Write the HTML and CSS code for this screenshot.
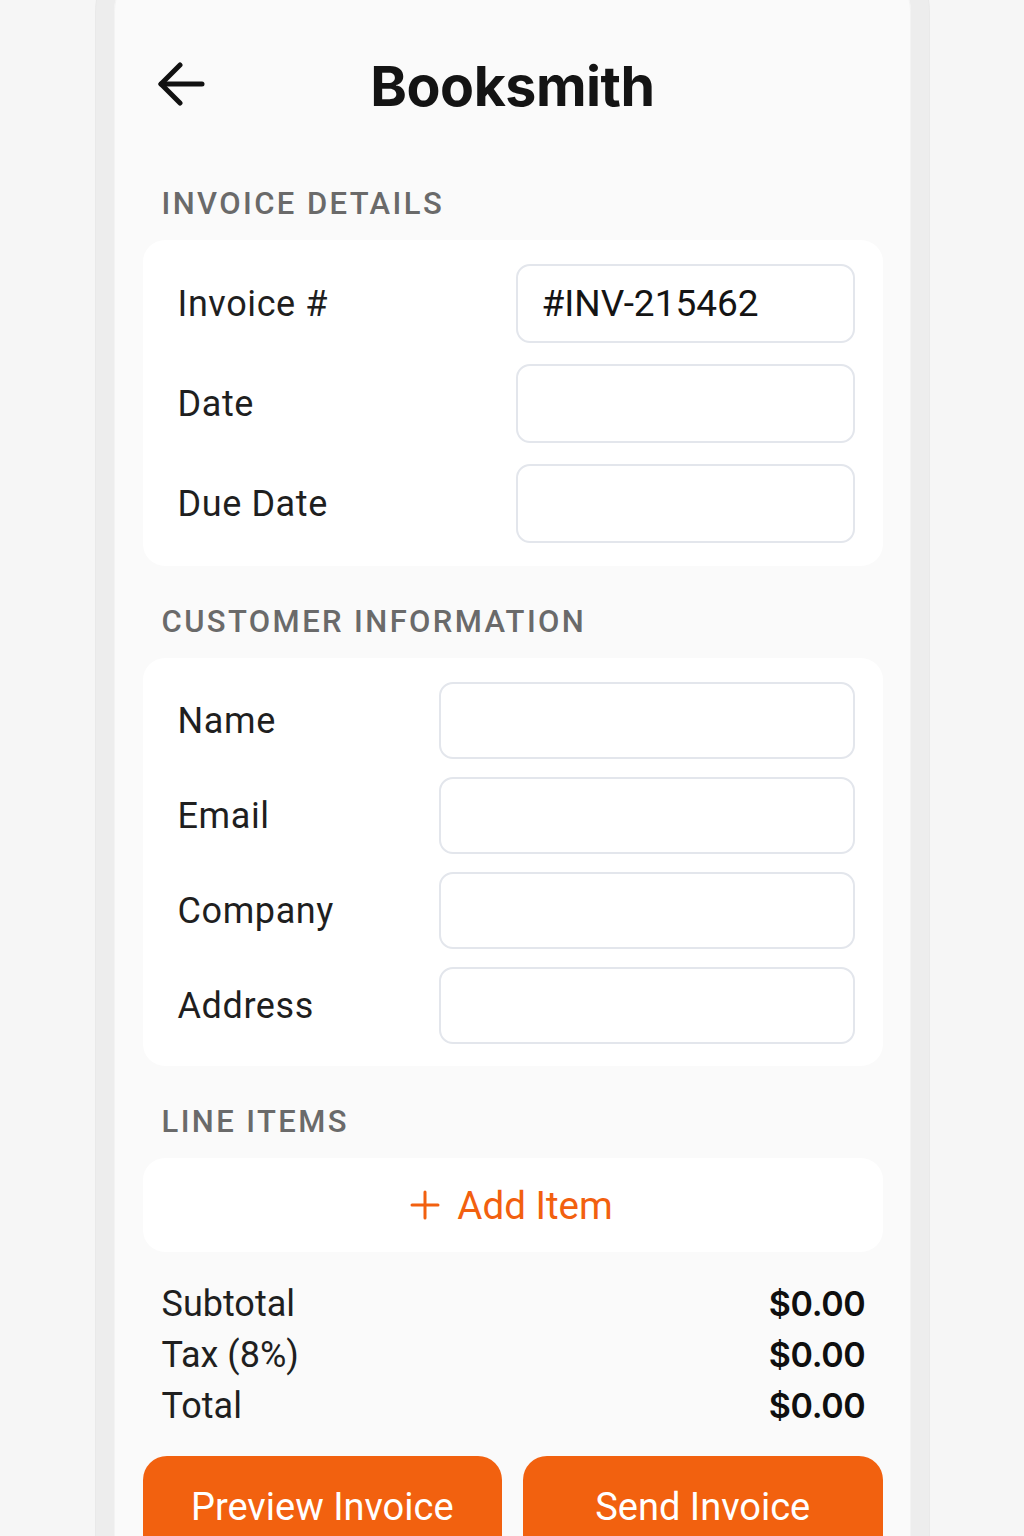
FILE: index.html
```html
<!DOCTYPE html>
<html lang="en">
<head>
<meta charset="utf-8">
<title>Booksmith – New Invoice</title>
<link rel="stylesheet" href="styles.css">
</head>
<body>
<div class="phone">
  <div class="screen">
    <header class="header">
      <button class="back" aria-label="Back">
        <svg width="48" height="44" viewBox="0 0 48 44" fill="none" stroke="#111" stroke-width="5" stroke-linecap="round" stroke-linejoin="round">
          <path d="M45 22H4"/>
          <path d="M23 3L4 22L23 41"/>
        </svg>
      </button>
      <h1 class="title">Booksmith</h1>
      <span></span>
    </header>

    <h2 class="section-label first">INVOICE DETAILS</h2>
    <section class="card form-card details">
      <label class="field-label">Invoice #</label>
      <div class="input"><span class="input-value">#INV-215462</span></div>
      <label class="field-label">Date</label>
      <div class="input"></div>
      <label class="field-label">Due Date</label>
      <div class="input"></div>
    </section>

    <h2 class="section-label">CUSTOMER INFORMATION</h2>
    <section class="card form-card customer">
      <label class="field-label">Name</label>
      <div class="input"></div>
      <label class="field-label">Email</label>
      <div class="input"></div>
      <label class="field-label">Company</label>
      <div class="input"></div>
      <label class="field-label">Address</label>
      <div class="input"></div>
    </section>

    <h2 class="section-label">LINE ITEMS</h2>
    <section class="card add-card">
      <button class="add-item">
        <svg width="30" height="30" viewBox="0 0 30 30" fill="none" stroke="#f2600f" stroke-width="3" stroke-linecap="round">
          <path d="M15 2V28"/>
          <path d="M2 15H28"/>
        </svg>
        <span>Add Item</span>
      </button>
    </section>

    <div class="totals">
      <div class="total-row"><span>Subtotal</span><strong>$0.00</strong></div>
      <div class="total-row"><span>Tax (8%)</span><strong>$0.00</strong></div>
      <div class="total-row"><span>Total</span><strong>$0.00</strong></div>
    </div>

    <div class="actions">
      <button class="btn">Preview Invoice</button>
      <button class="btn">Send Invoice</button>
    </div>
  </div>
</div>
</body>
</html>
```

FILE: styles.css
```css
html, body {
  margin: 0;
  padding: 0;
}
body {
  background: #f6f6f6;
  height: 1536px;
  overflow: hidden;
  font-family: Roboto, "Liberation Sans", Arial, sans-serif;
  color: #1c1c1c;
}
.phone {
  width: 797px;
  margin: -60px auto 0;
  border: 18px solid #ededed;
  border-bottom: 0;
  border-radius: 72px 72px 0 0;
  background: #fafafa;
  box-shadow: inset 0 0 0 1px #f3f3f3, 0 0 0 1px #e9e9e9;
  height: 1700px;
}
.screen {
  display: flex;
  flex-direction: column;
  padding: 34px 28px 0 29px;
  margin-top: 42px;
}
.header {
  height: 100px;
  display: grid;
  grid-template-columns: 1fr auto 1fr;
  align-items: center;
}
.back {
  background: none;
  border: 0;
  padding: 0;
  margin-left: 14px;
  width: 48px;
  height: 44px;
  display: flex;
  align-items: center;
  justify-self: start;
}
.title {
  margin: 0;
  font-family: Inter, "Noto Sans", sans-serif;
  font-weight: 700;
  font-size: 55.5px;
  letter-spacing: -0.5px;
  color: #141414;
  line-height: 1;
  padding-top: 4px;
}
.section-label {
  margin: 39px 0 19px 19px;
  font-size: 31px;
  line-height: 34px;
  font-weight: 500;
  letter-spacing: 2.4px;
  color: #6a6a6a;
}
.section-label.first {
  margin-top: 53px;
}
.card {
  background: #ffffff;
  border-radius: 22px;
}
.form-card {
  display: grid;
  align-items: center;
  padding: 24px 28px 23px 35px;
}
.details {
  grid-template-columns: 338px 1fr;
  row-gap: 21px;
}
.details .input {
  height: 75px;
}
.customer {
  grid-template-columns: 261px 1fr;
  row-gap: 18px;
  padding-bottom: 22px;
}
.customer .input {
  height: 73px;
}
.field-label {
  font-size: 36px;
  color: #1f1f1f;
  letter-spacing: 0.6px;
}
.input {
  border: 2px solid #e3e6ec;
  border-radius: 14px;
  background: #fff;
  display: flex;
  align-items: center;
  padding: 0 24px;
}
.input-value {
  font-size: 37px;
  color: #141414;
}
.add-card {
  height: 94px;
  display: flex;
  align-items: center;
  justify-content: center;
}
.add-item {
  background: none;
  border: 0;
  padding: 0;
  display: flex;
  align-items: center;
  gap: 17px;
  color: #f2600f;
  font-family: Roboto, "Liberation Sans", sans-serif;
  font-size: 38.5px;
  margin-left: -2px;
}
.totals {
  margin-top: 26px;
  padding: 0 17px 0 19px;
}
.total-row {
  display: flex;
  justify-content: space-between;
  align-items: center;
  height: 51px;
  font-size: 36px;
  color: #1f1f1f;
}
.total-row strong {
  font-family: Inter, "Noto Sans", sans-serif;
  font-weight: 600;
  font-size: 34px;
  color: #0f0f0f;
  letter-spacing: -0.3px;
}
.actions {
  margin-top: 25px;
  display: grid;
  grid-template-columns: 1fr 1fr;
  gap: 21px;
}
.btn {
  height: 110px;
  border: 0;
  border-radius: 24px;
  background: #f2610f;
  color: #fff;
  font-family: Roboto, "Liberation Sans", sans-serif;
  font-size: 38px;
  padding: 0 0 8px;
}
```
